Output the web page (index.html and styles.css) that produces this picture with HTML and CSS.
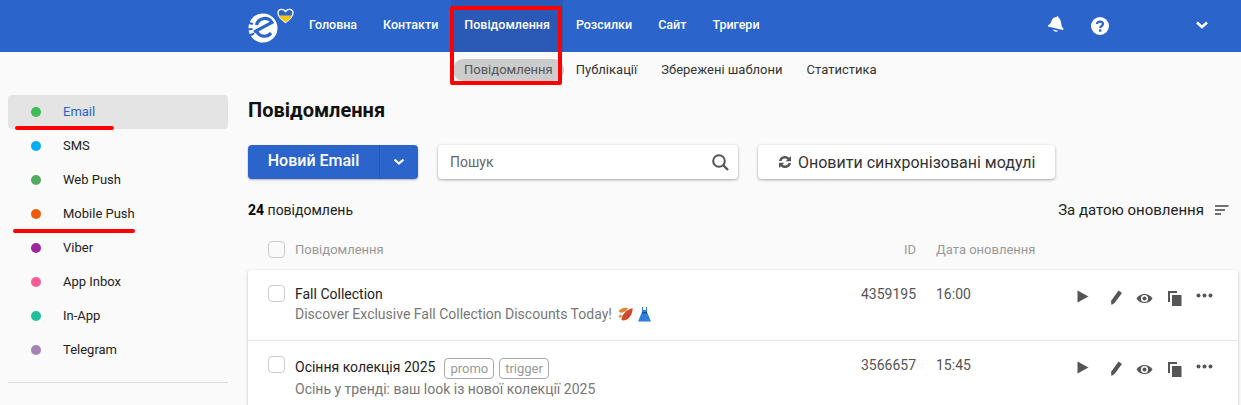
FILE: index.html
```html
<!DOCTYPE html>
<html>

<head>
    <title>Повідомлення</title>
    <meta name="viewport" content="width=device-width, initial-scale=1.0">
    <link rel="stylesheet" href="styles.css">
</head>

<body>
    <header class="topbar">
        <div class="logo">
            <svg width="50" height="44" viewBox="0 0 50 44">
                <circle cx="17" cy="26" r="14.500" fill="#fff" />
                <path d="M8 30 L26 20.500 A8.500 8.500 0 0 0 10.500 23 M10.500 29 A8.500 8.500 0 0 0 25 31" fill="none" stroke="#2b65cc" stroke-width="3.200" />
                <path d="M1 20.500 L7 22 M0.500 27.500 L6.500 27 M2.500 34 L8 31.500" stroke="#2b65cc" stroke-width="2" />
                <path d="M39.500 20.500 C36 18 32 15 32 11 C32 7 37 6 39.500 9.500 C42 6 47 7 47 11 C47 15 43 18 39.500 20.500 Z" fill="#2b65cc" stroke="#fff" stroke-width="1.300" />
                <path d="M32.800 13.500 H46.200 C45 16.500 42 18.800 39.500 20 C37 18.800 34 16.500 32.800 13.500 Z" fill="#f5c518" />
            </svg>
        </div>
        <nav class="mainnav">
            <a href="#">Головна</a>
            <a href="#">Контакти</a>
            <a href="#" class="active">Повідомлення</a>
            <a href="#">Розсилки</a>
            <a href="#">Сайт</a>
            <a href="#">Тригери</a>
        </nav>
        <div class="top-icons">
            <svg class="bell" width="18" height="18" viewBox="0 0 18 18">
                <path d="M10.500 1 C11.200 1.200 11.500 1.800 11.300 2.500 C13.500 4 14 6.500 14.300 9 C14.500 11 15.300 12.500 16.500 13.500 L16 15 L1 11.500 L1.300 10 C3 9.500 3.800 8 4.500 6 C5.300 3.500 7.500 2 9.800 2.100 C9.900 1.500 10 1.100 10.500 1 Z" fill="#fff" />
                <path d="M6 14.500 L11 15.700 C10.200 17.300 7 17 6 14.500 Z" fill="#fff" />
            </svg>
            <svg class="help" width="18" height="18" viewBox="0 0 18 18">
                <circle cx="9" cy="9" r="9" fill="#fff" />
                <path d="M6 7 C6 3.800 12 3.800 12 7 C12 9 9.200 9 9.200 11" fill="none" stroke="#2b65cc" stroke-width="2.200" />
                <rect x="8" y="12.300" width="2.400" height="2.400" fill="#2b65cc" />
            </svg>
            <svg class="chev" width="14" height="10" viewBox="0 0 14 10">
                <path d="M2 2.500 L7 7 L12 2.500" fill="none" stroke="#fff" stroke-width="2.600" />
            </svg>
        </div>
    </header>

    <nav class="subnav">
        <a href="#" class="active">Повідомлення</a>
        <a href="#">Публікації</a>
        <a href="#">Збережені шаблони</a>
        <a href="#">Статистика</a>
    </nav>

    <div class="layout">
        <aside class="sidebar">
            <a href="#" class="channel active"><i class="dot" style="background:#3dbb54"></i>Email</a>
            <a href="#" class="channel"><i class="dot" style="background:#00b0f5"></i>SMS</a>
            <a href="#" class="channel"><i class="dot" style="background:#52ab62"></i>Web Push</a>
            <a href="#" class="channel"><i class="dot" style="background:#f25a0a"></i>Mobile Push</a>
            <a href="#" class="channel"><i class="dot" style="background:#9c27a0"></i>Viber</a>
            <a href="#" class="channel"><i class="dot" style="background:#f75c97"></i>App Inbox</a>
            <a href="#" class="channel"><i class="dot" style="background:#1fbf9f"></i>In-App</a>
            <a href="#" class="channel"><i class="dot" style="background:#a783b5"></i>Telegram</a>
            <div class="side-line"></div>
        </aside>

        <main class="content">
            <h1>Повідомлення</h1>

            <div class="toolbar">
                <div class="btn-new">
                    <span class="btn-label">Новий Email</span>
                    <span class="btn-arrow">
                        <svg width="12" height="8" viewBox="0 0 12 8">
                            <path d="M1.500 1.500 L6 5.500 L10.500 1.500" fill="none" stroke="#fff" stroke-width="2.200" />
                        </svg>
                    </span>
                </div>
                <div class="search">
                    <span>Пошук</span>
                    <svg width="17" height="17" viewBox="0 0 17 17">
                        <circle cx="7" cy="7" r="5.800" fill="none" stroke="#555" stroke-width="2" />
                        <path d="M11.500 11.500 L16 16" stroke="#555" stroke-width="2.400" />
                    </svg>
                </div>
                <div class="btn-sync">
                    <svg width="14" height="14" viewBox="0 0 14 14">
                        <path d="M1 6 A6 6 0 0 1 11.200 2.800 L13 1 V6.300 H7.700 L9.500 4.500 A3.700 3.700 0 0 0 3.400 6 Z" fill="#555" />
                        <path d="M13 8 A6 6 0 0 1 2.800 11.200 L1 13 V7.700 H6.300 L4.500 9.500 A3.700 3.700 0 0 0 10.600 8 Z" fill="#555" />
                    </svg>
                    Оновити синхронізовані модулі
                </div>
            </div>

            <div class="list-info">
                <div><b>24</b> повідомлень</div>
                <div class="sort">
                    За датою оновлення
                    <svg width="14" height="10" viewBox="0 0 14 10">
                        <path d="M0 1 H13.500 M0 5 H10 M0 9 H6" stroke="#444" stroke-width="1.500" />
                    </svg>
                </div>
            </div>

            <div class="table-head">
                <span class="check"></span>
                <span class="col-name">Повідомлення</span>
                <span class="col-id">ID</span>
                <span class="col-date">Дата оновлення</span>
            </div>

            <div class="card">
                <div class="row">
                    <span class="check"></span>
                    <div class="col-name">
                        <div class="msg-title">Fall Collection</div>
                        <div class="msg-sub">Discover Exclusive Fall Collection Discounts Today!
                            <svg class="emoji leaf" width="15" height="14" viewBox="0 0 15 14">
                                <path d="M0.500 4 C3 1 7 0 10 1 L8 4 L3 6 Z" fill="#e0822f" />
                                <path d="M3.500 13 C3.500 8 8 3 14.500 1 C15 7 11 13 5.500 13.500 Z" fill="#cf4a2b" />
                                <path d="M0.500 9 L3 7.500 L4 9.500 L2 11 Z" fill="#e0822f" />
                            </svg>
                            <svg class="emoji" width="13" height="15" viewBox="0 0 13 15">
                                <path d="M4 0 H5 V3 H8 V0 H9 V5 L13 14.500 H0 L4 5 Z" fill="#2f7fdc" />
                                <rect x="4" y="5" width="5" height="1.500" fill="#1c4f9c" />
                            </svg>
                        </div>
                    </div>
                    <div class="col-id">4359195</div>
                    <div class="col-date">16:00</div>
                    <div class="actions">
                        <svg class="play" width="12" height="13" viewBox="0 0 12 13"><path d="M0.500 0.500 L11.500 6.500 L0.500 12.500 Z" fill="#555" /></svg>
                        <svg class="pencil" width="13" height="16" viewBox="0 0 13 16"><path d="M8.500 0.500 L12 3 L4.500 13 L1.500 15 L1 11 Z" fill="#555" /></svg>
                        <svg class="eye" width="17" height="11" viewBox="0 0 17 11"><path d="M0.500 5.500 C4 -0.500 13 -0.500 16.500 5.500 C13 11.500 4 11.500 0.500 5.500 Z" fill="#555" /><circle cx="8.500" cy="5.500" r="3.600" fill="#fff" /><circle cx="8.500" cy="5.500" r="2" fill="#555" /></svg>
                        <svg width="14" height="15" viewBox="0 0 14 15"><path d="M0 0 H9 V2 H2 V11 H0 Z M4 4 H13.500 V15 H4 Z" fill="#555" /></svg>
                        <svg class="more" width="17" height="5" viewBox="0 0 17 5"><circle cx="2.500" cy="2.500" r="2" fill="#555" /><circle cx="8.500" cy="2.500" r="2" fill="#555" /><circle cx="14.500" cy="2.500" r="2" fill="#555" /></svg>
                    </div>
                </div>
                <div class="row">
                    <span class="check"></span>
                    <div class="col-name">
                        <div class="msg-title tagged">
                            <span>Осіння колекція 2025</span>
                            <span class="tag">promo</span>
                            <span class="tag">trigger</span>
                        </div>
                        <div class="msg-sub">Осінь у тренді: ваш look із нової колекції 2025</div>
                    </div>
                    <div class="col-id">3566657</div>
                    <div class="col-date">15:45</div>
                    <div class="actions">
                        <svg class="play" width="12" height="13" viewBox="0 0 12 13"><path d="M0.500 0.500 L11.500 6.500 L0.500 12.500 Z" fill="#555" /></svg>
                        <svg class="pencil" width="13" height="16" viewBox="0 0 13 16"><path d="M8.500 0.500 L12 3 L4.500 13 L1.500 15 L1 11 Z" fill="#555" /></svg>
                        <svg class="eye" width="17" height="11" viewBox="0 0 17 11"><path d="M0.500 5.500 C4 -0.500 13 -0.500 16.500 5.500 C13 11.500 4 11.500 0.500 5.500 Z" fill="#555" /><circle cx="8.500" cy="5.500" r="3.600" fill="#fff" /><circle cx="8.500" cy="5.500" r="2" fill="#555" /></svg>
                        <svg width="14" height="15" viewBox="0 0 14 15"><path d="M0 0 H9 V2 H2 V11 H0 Z M4 4 H13.500 V15 H4 Z" fill="#555" /></svg>
                        <svg class="more" width="17" height="5" viewBox="0 0 17 5"><circle cx="2.500" cy="2.500" r="2" fill="#555" /><circle cx="8.500" cy="2.500" r="2" fill="#555" /><circle cx="14.500" cy="2.500" r="2" fill="#555" /></svg>
                    </div>
                </div>
            </div>
        </main>
    </div>

    <!-- red marks drawn on top of the screenshot -->
    <div class="mark-box"></div>
    <div class="mark-line mark-email"></div>
    <div class="mark-line mark-mobile"></div>
</body>

</html>
```

FILE: styles.css
```css
html,
body {
    margin: 0;
    height: 405px;
    overflow: hidden;
}

body {
    position: relative;
    font-family: Roboto, "Liberation Sans", sans-serif;
    font-size: 14px;
    color: #222;
    background: #fafafa;
}

a {
    color: inherit;
    text-decoration: none;
}

.topbar {
    display: flex;
    height: 52px;
    padding-left: 246px;
    background: #2b65cc;
    color: #fff;
}

.logo {
    width: 50px;
    height: 52px;
    padding-top: 2px;
    box-sizing: border-box;
}

.mainnav {
    display: flex;
}

.mainnav a {
    display: flex;
    align-items: center;
    height: 52px;
    padding: 0 13px 2px;
    box-sizing: border-box;
    font-size: 12.5px;
    font-weight: 500;
    line-height: 1;
}

.mainnav a.active {
    background: #2a5ab5;
}

.top-icons {
    display: flex;
    align-items: center;
    margin-left: auto;
    padding-right: 32px;
}

.bell {
    margin-top: -4px;
}

.help {
    margin-left: 26px;
}

.chev {
    margin-left: 86px;
    margin-bottom: 2px;
}

.subnav {
    display: flex;
    height: 35px;
    padding-left: 453px;
    padding-top: 7px;
    box-sizing: border-box;
    font-size: 13px;
}

.subnav a {
    height: 22px;
    line-height: 21px;
    padding: 0 11px;
    margin-right: 2px;
    border-radius: 11px;
    color: #333;
}

.subnav a.active {
    margin-right: 1px;
    background: #ccc;
    color: #555;
}

.layout {
    display: flex;
    padding-top: 8px;
}

.sidebar {
    width: 220px;
    margin-left: 8px;
    flex: none;
}

.channel {
    display: flex;
    align-items: center;
    height: 34px;
    padding-left: 23px;
    padding-bottom: 2px;
    box-sizing: border-box;
    border-radius: 4px;
    font-size: 13px;
}

.channel.active {
    background: #e4e4e4;
    color: #2b65cc;
}

.dot {
    width: 10px;
    height: 10px;
    border-radius: 50%;
    margin-top: 2px;
    margin-right: 22px;
}

.side-line {
    border-top: 1px solid #ddd;
    margin-top: 15px;
}

.content {
    flex: 1;
    margin-left: 20px;
    margin-right: 3px;
}

h1 {
    margin: 0;
    height: 30px;
    font-size: 20px;
    line-height: 30px;
    font-weight: 700;
    color: #111;
}

.toolbar {
    display: flex;
    margin-top: 20px;
}

.btn-new {
    display: flex;
    width: 170px;
    height: 34px;
    border-radius: 4px;
    background: #2b65cc;
    color: #fff;
    box-shadow: 0 1px 2px rgba(0, 0, 0, 0.3);
}

.btn-label {
    width: 132px;
    padding-bottom: 2px;
    box-sizing: border-box;
    text-align: center;
    line-height: 32px;
    font-size: 16px;
    font-weight: 500;
    border-right: 1px solid #2758b0;
}

.btn-arrow {
    flex: 1;
    display: flex;
    align-items: center;
    justify-content: center;
}

.search {
    display: flex;
    align-items: center;
    justify-content: space-between;
    width: 300px;
    height: 34px;
    margin-left: 20px;
    padding: 0 9px 0 12px;
    box-sizing: border-box;
    background: #fff;
    border-radius: 4px;
    box-shadow: 0 1px 3px rgba(0, 0, 0, 0.35);
    font-size: 14px;
    color: #666;
}

.btn-sync {
    display: flex;
    align-items: center;
    gap: 6px;
    height: 34px;
    margin-left: 20px;
    padding: 0 20px;
    background: #fff;
    border-radius: 4px;
    box-shadow: 0 1px 3px rgba(0, 0, 0, 0.35);
    font-size: 16px;
    color: #333;
}

.list-info {
    display: flex;
    justify-content: space-between;
    align-items: center;
    height: 20px;
    margin-top: 21px;
    padding-right: 9px;
    color: #222;
}

.list-info b {
    color: #000;
}

.sort {
    display: flex;
    align-items: center;
    gap: 11px;
    font-size: 15px;
}

.table-head {
    display: flex;
    align-items: center;
    height: 20px;
    margin-top: 19px;
    padding-left: 20px;
    font-size: 13px;
    color: #999;
}

.check {
    flex: none;
    width: 15px;
    height: 15px;
    border: 1px solid #ccc;
    border-radius: 4px;
    background: #fff;
}

.table-head .check {
    background: transparent;
}

.col-name {
    flex: 1;
    margin-left: 10px;
}

.col-id {
    width: 70px;
    text-align: right;
    font-size: 13px;
}

.col-date {
    width: 141px;
    margin-left: 20px;
}

.table-head .col-date {
    width: 302px;
}

.card {
    margin-top: 11px;
    background: #fff;
    border-radius: 3px;
    box-shadow: 0 1px 3px rgba(0, 0, 0, 0.25);
}

.row {
    display: flex;
    align-items: flex-start;
    height: 71px;
    padding: 15px 0 0 20px;
    box-sizing: border-box;
    border-bottom: 1px solid #e8e8e8;
}

.row .col-id,
.row .col-date {
    margin-top: 1px;
    font-size: 14px;
    color: #555;
}

.msg-title {
    height: 19px;
    line-height: 18px;
    color: #222;
}

.msg-title.tagged {
    display: flex;
    align-items: flex-start;
    gap: 9px;
    height: 21px;
    margin-top: 2px;
    line-height: 19px;
}

.msg-sub {
    display: flex;
    align-items: center;
    gap: 5px;
    line-height: 20px;
    color: #777;
}

.emoji {
    flex: none;
}

.leaf {
    margin-left: 1px;
}

.tag {
    height: 21px;
    line-height: 19px;
    padding: 0 5px;
    margin-right: -4px;
    box-sizing: border-box;
    border: 1px solid #aaa;
    border-radius: 4px;
    font-size: 13px;
    color: #999;
}

.actions {
    display: flex;
    align-items: center;
    gap: 14px;
    width: 161px;
    height: 20px;
    margin-top: 3px;
}

.play {
    margin-top: -4px;
}

.pencil {
    margin-left: 7px;
    margin-right: -1px;
}

.eye {
    margin-right: 1px;
}

.more {
    margin-top: -6px;
}

.mark-box {
    position: absolute;
    left: 450px;
    top: 6px;
    width: 104px;
    height: 71px;
    border: 4px solid #f00;
    border-radius: 2px;
}

.mark-line {
    position: absolute;
    height: 4px;
    background: #f00;
    border-radius: 2px;
}

.mark-email {
    left: 15px;
    top: 126px;
    width: 99px;
}

.mark-mobile {
    left: 13px;
    top: 229px;
    width: 122px;
}
```
